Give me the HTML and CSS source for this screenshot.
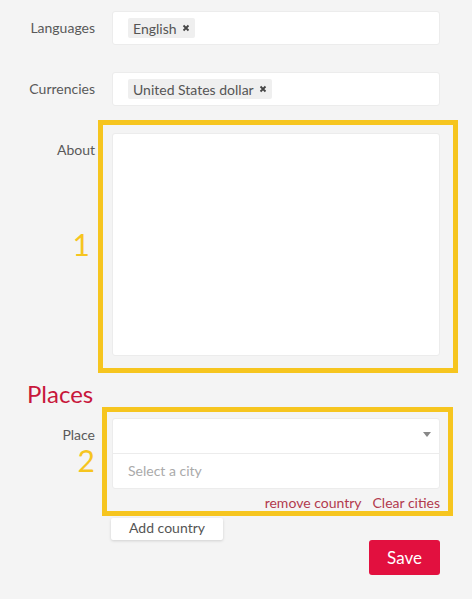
FILE: index.html
```html
<!DOCTYPE html>
<html lang="en">
<head>
<meta charset="UTF-8">
<title>Profile</title>
<link rel="stylesheet" href="styles.css">
</head>
<body>
    <form class="profile">
        <div class="row">
            <label class="lbl">Languages</label>
            <div class="field tags">
                <span class="chip">English<svg class="x" viewBox="0 0 8 8"><path d="M1.5 1.5l5 5M6.5 1.5l-5 5"/></svg></span>
            </div>
        </div>
        <div class="row">
            <label class="lbl">Currencies</label>
            <div class="field tags">
                <span class="chip">United States dollar<svg class="x" viewBox="0 0 8 8"><path d="M1.5 1.5l5 5M6.5 1.5l-5 5"/></svg></span>
            </div>
        </div>
        <div class="row">
            <div class="lbl stack">
                <label>About</label>
                <span class="num one">1</span>
            </div>
            <div class="mark mark-one">
                <textarea class="field about-text"></textarea>
            </div>
        </div>

        <h2 class="section">Places</h2>

        <div class="row">
            <div class="lbl stack">
                <label>Place</label>
                <span class="num two">2</span>
            </div>
            <div class="mark mark-two">
                <div class="place">
                    <div class="select"><span class="caret"></span></div>
                    <div class="city">Select a city</div>
                </div>
                <div class="links">
                    <a href="#">remove country</a>
                    <a href="#">Clear cities</a>
                </div>
            </div>
        </div>
        <div class="row last">
            <span></span>
            <div class="actions">
                <button type="button" class="add">Add country</button>
                <button type="button" class="save">Save</button>
            </div>
        </div>
    </form>
</body>
</html>
```

FILE: styles.css
```css
* {
    margin: 0;
    padding: 0;
    box-sizing: border-box;
}
html, body {
    width: 100%;
    height: 100%;
}
body {
    background-color: #f4f4f4;
    font-family: Lato, "Open Sans", sans-serif;
    font-size: 14px;
    color: #555;
}

/* form grid: label column + field column */
.profile {
    padding-top: 11px;
}
.row {
    display: grid;
    grid-template-columns: 95px 328px;
    column-gap: 17px;
    margin-bottom: 27px;
}
.lbl {
    text-align: right;
    line-height: 34px;
    font-size: 14px;
    color: #595959;
}
.stack {
    display: flex;
    flex-direction: column;
    align-items: flex-end;
}

/* yellow annotation numbers */
.num {
    color: #f6c51f;
    font-size: 30px;
    line-height: 30px;
}
.one {
    margin-top: 62px;
    margin-right: 5px;
}
.two {
    margin-top: -7px;
}

/* fields */
.field {
    display: block;
    width: 100%;
    height: 34px;
    background-color: white;
    border: 1px solid #ececec;
    border-radius: 3px;
}
.tags {
    display: flex;
    align-items: center;
    padding-left: 15px;
}
.chip {
    display: inline-flex;
    align-items: center;
    height: 20px;
    padding: 0 5px;
    background-color: #efefef;
    border-radius: 2px;
    font-size: 14px;
    color: #555;
}
.chip .x {
    width: 8px;
    height: 8px;
    margin-left: 5px;
    stroke: #444;
    stroke-width: 1.8;
}
.about-text {
    height: 223px;
    resize: none;
    font: inherit;
}

/* annotation frames drawn over the form */
.mark {
    position: relative;
}
.mark::after {
    content: "";
    position: absolute;
    border: 5px solid #f6c51f;
    pointer-events: none;
}
.mark-one::after {
    top: -13px;
    left: -14px;
    right: -18px;
    bottom: -17px;
}
.mark-two::after {
    top: -11px;
    left: -10px;
    right: -13px;
    bottom: -5px;
}

/* places */
.section {
    font-weight: normal;
    font-size: 24px;
    line-height: 26px;
    color: #c8173b;
    padding-left: 27px;
    margin-top: -2px;
    margin-bottom: 11px;
}
.place {
    background-color: white;
    border: 1px solid #ececec;
    border-radius: 3px;
}
.select {
    height: 35px;
    border-bottom: 1px solid #ececec;
    display: flex;
    align-items: center;
    justify-content: flex-end;
    padding-right: 8px;
}
.caret {
    width: 0;
    height: 0;
    border-left: 4px solid transparent;
    border-right: 4px solid transparent;
    border-top: 5px solid #888;
    margin-top: -4px;
}
.city {
    height: 34px;
    line-height: 34px;
    padding-left: 15px;
    font-size: 14px;
    color: #aaa;
}
.links {
    display: flex;
    justify-content: flex-end;
    gap: 11px;
    padding-top: 5px;
    line-height: 17px;
}
.links a {
    color: #b23a4e;
    text-decoration: none;
    font-size: 14px;
}

/* buttons */
.last {
    margin-top: -20px;
}
.actions {
    display: flex;
    flex-direction: column;
    align-items: flex-start;
}
.add {
    width: 112px;
    height: 22px;
    border: none;
    border-radius: 2px;
    background-color: white;
    box-shadow: 0 1px 3px rgba(0, 0, 0, 0.15);
    font: 14px/20px Lato, sans-serif;
    padding-bottom: 2px;
    color: #555;
    margin-left: -1px;
}
.save {
    align-self: flex-end;
    width: 71px;
    height: 35px;
    border: none;
    border-radius: 3px;
    background-color: #e2103f;
    color: white;
    font: 17px Lato, sans-serif;
}
```
